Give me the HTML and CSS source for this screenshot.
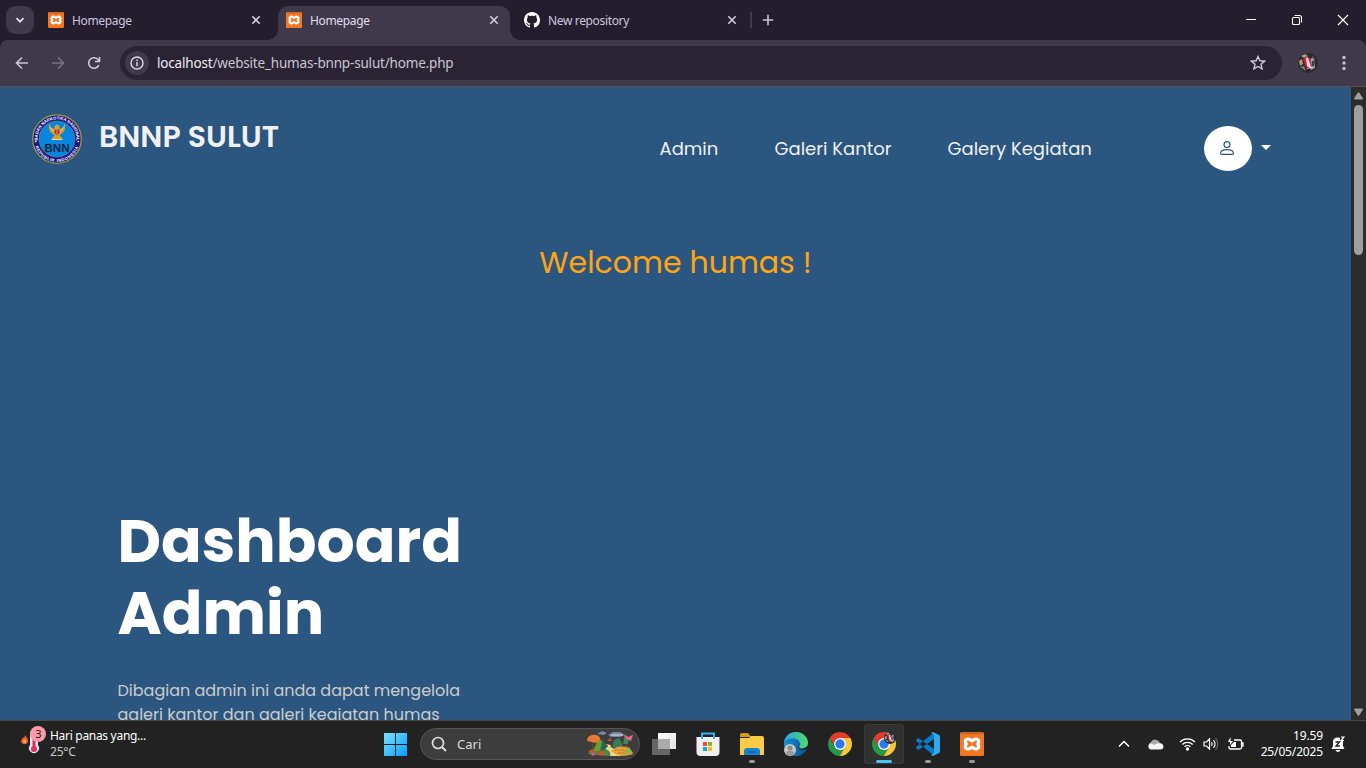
FILE: index.html
```html
<!DOCTYPE html>
<html lang="id">
<head>
<meta charset="utf-8">
<title>Homepage</title>
<link rel="stylesheet" href="styles.css">
</head>
<body>
<svg class="defs" width="0" height="0" aria-hidden="true">
  <defs>
    <symbol id="xampp" viewBox="0 0 24 24">
      <rect width="24" height="24" rx="1.5" fill="#f37623"/>
      <path d="M1 1.2h22" stroke="#b9622c" stroke-width="1.6"/>
      <path d="M8.200 7C4.800 7 4.400 10.300 6.500 12C4.400 13.700 4.800 17 8.200 17C10.500 17 10.500 15.300 12 15.300C13.500 15.300 13.500 17 15.800 17C19.200 17 19.600 13.700 17.500 12C19.600 10.300 19.200 7 15.800 7C13.500 7 13.500 8.700 12 8.700C10.500 8.700 10.500 7 8.200 7Z" fill="none" stroke="#fff" stroke-width="3.200" stroke-linejoin="round"/>
      <path d="M12 8v2.300M12 13.700v2.300" stroke="#fff" stroke-width="2.400"/>
    </symbol>
    <symbol id="close" viewBox="0 0 10 10"><path d="M1.300 1.300l7.400 7.400M8.700 1.300l-7.400 7.400" stroke="currentColor" stroke-width="1.600"/></symbol>
    <symbol id="chrome" viewBox="0 0 24 24">
      <path d="M12 12L22.390 6A12 12 0 0 1 12 24Z" fill="#fcc934"/>
      <path d="M12 6h10.390L17.200 15L12 12Z" fill="#fcc934"/>
      <path d="M1.610 6A12 12 0 0 1 22.390 6H12A6 6 0 0 0 6.800 15Z" fill="#e33b2e"/>
      <path d="M1.610 6L6.800 15A6 6 0 0 0 17.200 15L12 24A12 12 0 0 1 1.610 6Z" fill="#279847"/>
      <circle cx="12" cy="12" r="6" fill="#fff"/><circle cx="12" cy="12" r="4.700" fill="#2f79ee"/>
    </symbol>
    <symbol id="avatar" viewBox="0 0 20 20">
      <circle cx="10" cy="10" r="10" fill="#272b2b"/>
      <path d="M3 3l4-2 3 2-4 2zM1 8l3-2 1 5-3 2z" fill="#b99b78"/>
      <path d="M13 5l3 1 1 9-4 2-3-5z" fill="#9ba4a8"/>
      <path d="M6 6l4-2 4 11-5 1z" fill="#e8ddde"/>
      <path d="M5 6l3-1 1 8 4 3-5-1zM10 4l2 1 2 8-1 1z" fill="#d41443"/>
      <path d="M2 14l4-1 2 5zM14 3l3 3-2 1z" fill="#78866f"/>
      <path d="M15 8v5" stroke="#171c22" stroke-width="1.500"/>
    </symbol>
  </defs>
</svg>
<div class="screen">
  <header class="tabs">
    <button class="tab-search"><svg width="10" height="10" viewBox="0 0 10 10"><path d="M1.500 3.200L5 6.700l3.500-3.500" fill="none" stroke="#e5dff0" stroke-width="1.700"/></svg></button>
    <div class="tab tab-first"><svg width="16" height="16"><use href="#xampp"/></svg><span>Homepage</span><svg class="x" width="10" height="10"><use href="#close"/></svg></div>
    <div class="tab active"><svg width="16" height="16"><use href="#xampp"/></svg><span>Homepage</span><svg class="x" width="10" height="10"><use href="#close"/></svg></div>
    <div class="tab"><svg width="16" height="16" viewBox="0 0 16 16"><path fill="#fff" d="M8 0C3.580 0 0 3.580 0 8c0 3.540 2.290 6.530 5.470 7.590.4.070.55-.17.55-.38 0-.19-.01-.82-.01-1.490-2.010.37-2.530-.49-2.690-.94-.09-.23-.48-.94-.82-1.130-.28-.15-.68-.52-.01-.53.63-.01 1.080.58 1.230.82.72 1.210 1.870.87 2.330.66.070-.52.28-.87.51-1.070-1.780-.2-3.640-.89-3.640-3.950 0-.87.31-1.590.82-2.150-.08-.2-.36-1.020.08-2.120 0 0 .67-.21 2.200.82.64-.18 1.320-.27 2-.27s1.360.09 2 .27c1.530-1.040 2.200-.82 2.200-.82.44 1.100.16 1.920.08 2.120.51.56.82 1.270.82 2.150 0 3.070-1.870 3.750-3.650 3.950.29.25.54.73.54 1.480 0 1.070-.01 1.930-.01 2.200 0 .21.15.46.55.38A8.010 8.010 0 0 0 16 8c0-4.420-3.580-8-8-8z"/></svg><span>New repository</span><svg class="x" width="10" height="10"><use href="#close"/></svg></div>
    <i class="divider"></i>
    <svg class="plus" width="12" height="12" viewBox="0 0 12 12"><path d="M6 .8v10.400M.8 6h10.400" stroke="#c9bfda" stroke-width="1.600"/></svg>
    <div class="window-controls">
      <svg width="12" height="12" viewBox="0 0 12 12"><path d="M1 5.500h10" stroke="#fff"/></svg>
      <svg width="12" height="12" viewBox="0 0 12 12"><rect x="1.500" y="3.500" width="7" height="7" rx="1" fill="none" stroke="#fff" stroke-width="1.100"/><path d="M3.500 1.500h5a2 2 0 0 1 2 2v5" fill="none" stroke="#fff" stroke-width="1.100"/></svg>
      <svg width="12" height="12" viewBox="0 0 12 12"><path d="M1 1l10 10M11 1L1 11" stroke="#fff" stroke-width="1.200"/></svg>
    </div>
  </header>
  <div class="toolbar">
    <div class="navbuttons">
      <svg width="16" height="16" viewBox="0 0 16 16" fill="none" stroke="#cec4dc" stroke-width="1.600"><path d="M14 8H3M8 2.500L2.500 8 8 13.500"/></svg>
      <svg width="16" height="16" viewBox="0 0 16 16" fill="none" stroke="#7b7188" stroke-width="1.600"><path d="M2 8h11M8 2.500L13.500 8 8 13.500"/></svg>
      <svg width="16" height="16" viewBox="0 0 16 16" fill="none" stroke="#d2c9df" stroke-width="1.600"><path d="M12.800 10.200A5.300 5.300 0 1 1 12.300 4.900L13.500 6.200M13.500 2v4.500H9"/></svg>
    </div>
    <div class="address">
      <span class="info"><svg width="14" height="14" viewBox="0 0 14 14"><circle cx="7" cy="7" r="6" fill="none" stroke="#ddd7e5" stroke-width="1.400"/><path d="M7 6v4.300M7 3.500v1.500" stroke="#ddd7e5" stroke-width="1.500"/></svg></span>
      <span class="url"><b>localhost</b>/website_humas-bnnp-sulut/home.php</span>
      <svg class="star" width="16" height="16" viewBox="0 0 16 16"><path d="M8 1.500l1.900 4.300 4.700.4-3.600 3.100 1.100 4.600L8 11.500l-4.100 2.400L5 9.300 1.400 6.200l4.700-.4z" fill="none" stroke="#d2cadd" stroke-width="1.400"/></svg>
    </div>
    <svg class="profile" width="20" height="20"><use href="#avatar"/></svg>
    <svg class="menu" width="4" height="16" viewBox="0 0 4 16" fill="#c9bfda"><circle cx="2" cy="2.500" r="1.700"/><circle cx="2" cy="8" r="1.700"/><circle cx="2" cy="13.500" r="1.700"/></svg>
  </div>
  <div class="viewport">
    <main class="page">
      <nav class="site-nav">
        <a class="brand">
          <svg class="seal" width="50" height="50" viewBox="0 0 100 100">
            <defs><path id="top-arc" d="M11.500 56A39 39 0 1 1 88.500 56"/><path id="low-arc" d="M5.500 60A45.500 45.500 0 0 0 94.500 60"/></defs>
            <circle cx="50" cy="50" r="48.500" fill="#17168a" stroke="#a39a38" stroke-width="2.500"/>
            <circle cx="50" cy="50" r="36" fill="#0785df" stroke="#8f9848"/>
            <text class="seal-ring"><textPath href="#top-arc" startOffset="50%">BADAN NARKOTIKA NASIONAL</textPath></text>
            <text class="seal-ring seal-low"><textPath href="#low-arc" startOffset="50%">REPUBLIK INDONESIA</textPath></text>
            <circle cx="7.500" cy="55" r="1.700" fill="#fff"/><circle cx="92.500" cy="55" r="1.700" fill="#fff"/>
            <path d="M35 19c-4 10 2 20 10 23l-6 8h22l-6-8c8-3 14-13 10-23-2 8-5 11-9 11l-2-7-4-2-4 2-2 7c-4 0-7-3-9-11z" fill="#d4a12f"/>
            <path d="M37 27l8 8M63 27l-8 8M39 51h22" stroke="#f4d88d" stroke-width="2"/>
            <path d="M45 31h10v7l-5 5-5-5z" fill="#bb2824"/><path d="M50 31v11" stroke="#fff"/>
            <text x="50" y="75" class="seal-name">BNN</text>
          </svg>
          <span class="brand-name">BNNP SULUT</span>
        </a>
        <div class="links"><a class="l1">Admin</a><a class="l2">Galeri Kantor</a><a class="l3">Galery Kegiatan</a></div>
        <div class="account"><span class="person"><svg width="14" height="14" viewBox="0 0 14 14" fill="none" stroke="#2c567f" stroke-width="1.150"><circle cx="7" cy="3.600" r="3"/><path d="M1.600 13.400h10.800q1 0 1-1C13.400 10.200 11 8.600 7 8.600S.6 10.200.6 12.400q0 1 1 1z"/></svg></span><i class="caret"></i></div>
      </nav>
      <p class="welcome">Welcome humas !</p>
      <section class="hero"><h1>Dashboard<br>Admin</h1>
      <p>Dibagian admin ini anda dapat mengelola<br>galeri kantor dan galeri kegiatan humas</p></section>
    </main>
    <aside class="scrollbar"><svg width="9" height="8" viewBox="0 0 9 8"><path d="M3.700.8Q4.500-.2 5.300.8L8.700 6Q9.100 7.500 8 7.500H1Q-.1 7.500.3 6z" fill="#9f9f9f"/></svg><i class="thumb"></i><svg width="9" height="8" viewBox="0 0 9 8"><path d="M3.700 7.200Q4.500 8.200 5.300 7.200L8.700 2Q9.100.5 8 .5H1Q-.1.5.3 2z" fill="#9f9f9f"/></svg></aside>
  </div>
  <footer class="taskbar">
    <div class="weather">
      <svg width="28" height="32" viewBox="0 0 28 32">
        <path d="M4 10c1 2 4 4 3 7s-7 3-7-1c0-2 2-2 2-4l1 1z" fill="#f1592e"/><path d="M4 14c2 2 1 4 0 4s-2-1-2-2z" fill="#ffc33f"/>
        <path d="M9 9a4 4 0 0 1 8 0v11a5 5 0 1 1-8 0z" fill="#d5e4f8"/><path d="M13 9v14" stroke="#e22f56" stroke-width="3"/><circle cx="13" cy="24" r="3" fill="#e22f56"/>
        <circle cx="17" cy="9" r="8" fill="#ff99a7"/><text x="17.400" y="13" class="badge">3</text>
      </svg>
      <div><div class="weather-title">Hari panas yang...</div><div class="temp">25°C</div></div>
    </div>
    <div class="apps">
      <svg class="windows" width="24" height="24" viewBox="0 0 24 24"><defs><linearGradient id="win" gradientUnits="userSpaceOnUse" x1="0" y1="0" x2="24" y2="24"><stop stop-color="#7ce6fd"/><stop offset="1" stop-color="#0b9bf8"/></linearGradient></defs><path fill="url(#win)" d="M1 1h11v11H1zM13 1h11v11H13zM1 13h11v11H1zM13 13h11v11H13z"/></svg>
      <div class="search">
        <svg width="16" height="16" viewBox="0 0 16 16"><circle cx="7" cy="7" r="5.500" fill="none" stroke="#ddd" stroke-width="1.700"/><path d="M11 11l4 4" stroke="#ddd" stroke-width="2"/></svg>
        <span>Cari</span>
        <svg class="scene" width="48" height="26" viewBox="0 0 48 26">
          <path d="M11 3l5-3 5 2-3 2zM22 4l5-3 7 0 5 3-5 2H25z" fill="#78859b"/><path d="M25 4h12" stroke="#bac4db" stroke-width="1.500"/>
          <path d="M2 23Q7 16 15 19q7-8 15 0 9-5 17 4Q28 27 2 23" fill="#548747"/>
          <path d="M7 7v12M14 10v13M31 8v12M41 7v12" stroke="#684527" stroke-width="1.500"/>
          <path d="M1 10q0-5 5-6 6-1 8 3l1 3-5 2z" fill="#e77832"/><path d="M7 20l4-9 3-2 5 3 1 8z" fill="#6c9b32"/><path d="M14 20l3-12 5 11z" fill="#24664f"/><path d="M26 16l2-7 5-2 4 7-3 4z" fill="#347d58"/>
          <path d="M37 13l2-10 4 4-1 6z" fill="#438450"/><path d="M38 4l4 2 5-2-2 6-5-2z" fill="#df688d"/><path d="M19 13q6 2 0 5 7 2 5 7h11q-3-6-11-9 4-2-5-3" fill="#f2d78e"/>
          <path d="M25 20q8-7 18-3l4 6q-8 3-16 1z" fill="#e2a83c"/><path d="M29 19h12M32 22h13M35 16h6" stroke="#df632d" stroke-width="1.500" stroke-dasharray="1.500 1"/>
          <path d="M2 21l4-3 3 3zM11 24l4-5 4 5zM21 10h5l-2-3z" fill="#da4d2b"/><circle cx="7" cy="23" r="2" fill="#c75b7b"/><path d="M37 22l6-6 4 6z" fill="#90b44b"/>
        </svg>
      </div>
      <div class="app"><svg width="24" height="24" viewBox="0 0 24 24"><defs><linearGradient id="glass" x2="1" y2="1"><stop stop-color="#fff"/><stop offset="1" stop-color="#e2e2e2"/></linearGradient></defs><path fill="url(#glass)" d="M6 1h18v16H6z"/><path fill="#666" d="M0 7h18v16H0z"/><path d="M6 7h12v10H6z" fill="#aaa"/></svg></div>
      <div class="app"><svg width="24" height="24" viewBox="0 0 24 24"><path d="M6 7V1.500h12V7" fill="none" stroke="#31b4e8" stroke-width="2"/><path d="M.5 5h23v15q0 4-4 4h-15q-4 0-4-4z" fill="#efefef"/><path d="M6 5v2M18 5v2" stroke="#31b4e8" stroke-width="2"/><path fill="#ef4f27" d="M7 10h4v4H7z"/><path fill="#80b91e" d="M12 10h4v4h-4z"/><path fill="#16a5e5" d="M7 15h4v4H7z"/><path fill="#ffba0b" d="M12 15h4v4h-4z"/></svg></div>
      <div class="app"><svg width="24" height="24" viewBox="0 0 24 24"><path d="M0 3q0-2 2-2h6l3 4H0z" fill="#d89b0c"/><path d="M0 6h9l2-2h11q2 0 2 2v17H0z" fill="#fccb45"/><path d="M4 23v-4q0-3 3-3h10q3 0 3 3v4z" fill="#1683d2"/><path d="M8 20h8" stroke="#1269af" stroke-width="2"/></svg><i></i></div>
      <div class="app"><svg width="24" height="24" viewBox="0 0 24 24"><defs><linearGradient id="edge"><stop stop-color="#29a5e6"/><stop offset="1" stop-color="#55d765"/></linearGradient><linearGradient id="edge-b"><stop stop-color="#1593d8"/><stop offset="1" stop-color="#084c95"/></linearGradient></defs><circle cx="12" cy="12" r="12" fill="url(#edge-b)"/><path d="M0 10C1 4 6 0 12 0c8 0 12 6 12 11 0 6-9 7-9 4 0-1 2-2 1-4C14 5 5 5 0 10" fill="url(#edge)"/><path d="M15 15q2 4 9-1l-.5 2.500Q22 18 19 18q-5 0-5-5z" fill="#202320"/><circle cx="6" cy="18" r="6" fill="#c8c8c5"/><circle cx="6" cy="16" r="2.500" fill="#8b8b8b"/><path d="M2 22v-2q4-3 8 0v2q-4 3-8 0" fill="#999"/></svg></div>
      <div class="app"><svg width="24" height="24"><use href="#chrome"/></svg></div>
      <div class="app current"><svg width="24" height="24" viewBox="0 0 24 24"><use href="#chrome"/><use href="#avatar" x="12" y="0" width="12" height="12"/></svg><i></i></div>
      <div class="app"><svg width="24" height="24" viewBox="0 0 24 24"><path d="M0 8l2.500-2L18 17v6.500L0 9zM0 16l2.500 2L18 7V.5L0 15z" fill="#087bc8"/><path d="M17 0l6 3q1 .5 1 2v14q0 1.500-1 2l-6 3q-1 0-2-1l3-2V3l-3-2z" fill="#32a8ef"/></svg><i></i></div>
      <div class="app"><svg width="24" height="24"><use href="#xampp"/></svg><i></i></div>
    </div>
    <div class="tray">
      <svg width="12" height="12" viewBox="0 0 12 12"><path d="M1 8.500l5-5 5 5" fill="none" stroke="#fff" stroke-width="1.500"/></svg>
      <svg class="cloud" width="17" height="12" viewBox="0 0 17 12"><path d="M4 11a4 4 0 0 1 0-7 5 5 0 0 1 9 1 3.500 3.500 0 0 1 0 6z" fill="#aaa"/><path d="M3.500 11.500A3.300 3.300 0 0 1 3 5.500q2-.5 4 1.500l3-1.500q6-1.500 6.500 3 0 3-3 3z" fill="#f5f5f5"/></svg>
      <svg class="wifi" width="17" height="14" viewBox="0 0 17 14" fill="none" stroke="#fff" stroke-width="1.300"><path d="M1 5a10.500 10.500 0 0 1 15 0M3.300 7.500a7.300 7.300 0 0 1 10.400 0M5.600 9.800a4.200 4.200 0 0 1 5.800 0"/><circle cx="8.500" cy="12" r="1" fill="#fff"/></svg>
      <svg class="sound" width="16" height="14" viewBox="0 0 16 14" fill="none" stroke="#fff" stroke-width="1.200"><path d="M1 5h2.500l3-3v10l-3-3H1zM8.500 5q1.500 2 0 4M10.500 3q3 4 0 8"/><path d="M12.500 1q4.500 6 0 12" stroke="#666"/></svg>
      <svg class="battery" width="17" height="14" viewBox="0 0 17 14" fill="none" stroke="#fff" stroke-width="1.300"><path d="M7 3h6q1.500 0 1.500 1.500v6Q14.500 12 13 12H3.500Q2 12 2 10.500V9M15 6h1v3h-1"/><path d="M4 10V8l3-3h2v5zM3.500 0L1 5h2v3l3-4H3.500z" fill="#fff" stroke="none"/></svg>
      <div class="clock"><div>19.59</div><div>25/05/2025</div></div>
      <svg class="bell" width="14" height="16" viewBox="0 0 14 16"><path d="M2 10V6q0-4.500 5-4.500T12 6v4l1.500 3H.5zM4.500 14h5q-1 2-2.500 2t-2.500-2" fill="#fff"/><path d="M4.500 6h4L5 10h4" fill="none" stroke="#202320" stroke-width="1.400"/><path d="M9 0h5v5H9z" fill="#202320"/><path d="M10 1h3l-3 3.500h3" fill="none" stroke="#fff" stroke-width="1.200"/></svg>
    </div>
  </footer>
</div>
</body>
</html>
```
FILE: styles.css
```css
*{box-sizing:border-box}
body{margin:0;background:#241d2e;overflow:hidden;font-family:"Segoe UI","Noto Sans",sans-serif}
svg{display:block;flex:none}
.defs{position:absolute}
.screen{width:1366px;height:768px;display:flex;flex-direction:column;overflow:hidden}
.tabs{height:40px;background:#241d2e;display:flex;align-items:flex-start;padding-left:6px;flex:none}
.tab-search{width:28px;height:28px;margin-top:6px;border:0;border-radius:9px;background:#40384b;display:flex;align-items:center;justify-content:center;padding:0;flex:none}
.tab{position:relative;width:232px;height:34px;margin-top:6px;padding:0 11px 6px 8px;display:flex;flex:none;align-items:center;gap:8px;color:#cec5df;font-size:12px;letter-spacing:-.35px}
.tab span{padding-top:1px}
.tab-first{margin:6px 6px 0}
.tab.active{background:#40384b;color:#e4ddef;border-radius:10px 10px 0 0}
.tab.active::before,.tab.active::after{content:"";position:absolute;bottom:0;width:10px;height:10px}
.tab.active::before{left:-10px;background:radial-gradient(circle at 0 0,transparent 9.5px,#40384b 10px)}
.tab.active::after{right:-10px;background:radial-gradient(circle at 100% 0,transparent 9.5px,#40384b 10px)}
.tab.active+.tab{margin-left:6px}
.tab .x{margin-left:auto;color:#d5ccdf}
.divider{width:2px;height:16px;margin:12px 0 0 2px;background:#40384b}
.plus{margin:14px 0 0 10px}
.window-controls{display:flex;gap:34px;margin:14px 17px 0 auto}
.toolbar{height:47px;flex:none;background:linear-gradient(#40384b 46px,#55505a 46px);display:flex;align-items:center;padding:0 20px 1px 14px;border-radius:8px 8px 0 0}
.navbuttons{display:flex;gap:20px}
.address{width:1162px;height:34px;margin-left:18px;background:#2a2334;border-radius:17px;display:flex;align-items:center;padding:0 16px 0 5px}
.info{width:24px;height:24px;border-radius:50%;background:#40384b;display:grid;place-items:center}
.url{font-size:13.5px;letter-spacing:-.18px;color:#cbc5d1;margin-left:8px;white-space:nowrap}
.url b{font-weight:400;color:#f0ecf5}
.star{margin-left:auto}
.profile{margin-left:16px}
.menu{margin-left:auto}
.viewport{height:633px;display:flex;flex:none;overflow:hidden}
.page{width:1351px;background:#2b567f;font-family:"Poppins","Inter",sans-serif;overflow:hidden}
.site-nav{height:122px;display:flex;padding:27px 80px 0 32px;align-items:flex-start}
.brand{display:flex;gap:17px;color:#f0f0f0}
.brand-name{font-size:30px;font-weight:600;line-height:45px;white-space:nowrap}
.seal-ring{font:bold 8.4px "Liberation Sans",sans-serif;fill:#fff;text-anchor:middle}
.seal-low{letter-spacing:1.2px}
.seal-name{font:bold 23px "Liberation Sans",sans-serif;fill:#06233c;text-anchor:middle}
.links{display:flex;margin-left:auto;margin-right:111.5px;color:#f0f0f0;font-size:18px;line-height:28px;padding-top:21px;white-space:nowrap}
.links a{flex:none}
.l1{width:115px}.l2{width:173px}.l3{width:145px}
.account{display:flex;padding-top:12px;gap:9px}
.person{width:48px;height:45px;border-radius:50%;background:#fff;display:grid;place-items:center;padding:0 2px 1px 0}
.caret{margin-top:19px;border:5px solid transparent;border-top-color:#fff;border-bottom:0;height:0}
.welcome{margin:30px 0 0;text-align:center;font-size:30px;line-height:48px;color:#ffa514}
.hero{padding:218px 0 0 117.5px}
.hero h1{font-size:60px;line-height:72px;font-weight:700;margin:0;color:#fff}
.hero p{margin:30px 0 0;font-size:16px;line-height:24px;color:#ccc;white-space:nowrap}
.scrollbar{width:15px;background:#2c2c2c;display:flex;flex-direction:column;align-items:center;padding:5px 0 4px}
.thumb{width:9px;height:150px;margin:5px 0 auto;border-radius:5px;background:#9f9f9f}
.taskbar{height:48px;background:#212221;border-top:1px solid #484a48;display:flex;color:#fff;flex:none}
.weather{display:flex;width:383px;padding:4px 0 0 21px;font-size:12px;line-height:16px}
.weather>div{padding:3px 0 0 1px}
.weather-title{letter-spacing:-.3px}
.temp{color:#c8c8c8;letter-spacing:-.2px}
.badge{font:11px "Noto Sans",sans-serif;fill:#1b1b1b;text-anchor:middle}
.apps{display:flex;height:45px;align-items:center}
.windows{margin-right:13px}
.search{width:220px;height:32px;border:1px solid #555;border-radius:16px;background:#3d3d3d;display:flex;align-items:center;padding:0 5px 0 10px;color:#ddd;font-size:13px}
.search span{margin-left:10px}
.search .scene{margin-left:auto}
.search+.app{margin-left:4px}
.app{width:40px;height:40px;margin-right:4px;display:grid;place-items:center;position:relative;border-radius:4px}
.current{background:#303230;box-shadow:inset 0 0 0 1px #393b39}
.app i{position:absolute;bottom:1px;left:17px;width:6px;height:3px;border-radius:2px;background:#999}
.app.current i{left:12px;width:16px;background:#4cc2ff}
.tray{margin-left:auto;height:45px;display:flex;align-items:center;padding-right:21px}
.cloud{margin-left:17px}.wifi{margin-left:15px}.sound{margin-left:7px}.battery{margin-left:8px}
.clock{width:79px;text-align:right;font-size:12px;line-height:16px;margin-right:8px;letter-spacing:-.15px}
```
